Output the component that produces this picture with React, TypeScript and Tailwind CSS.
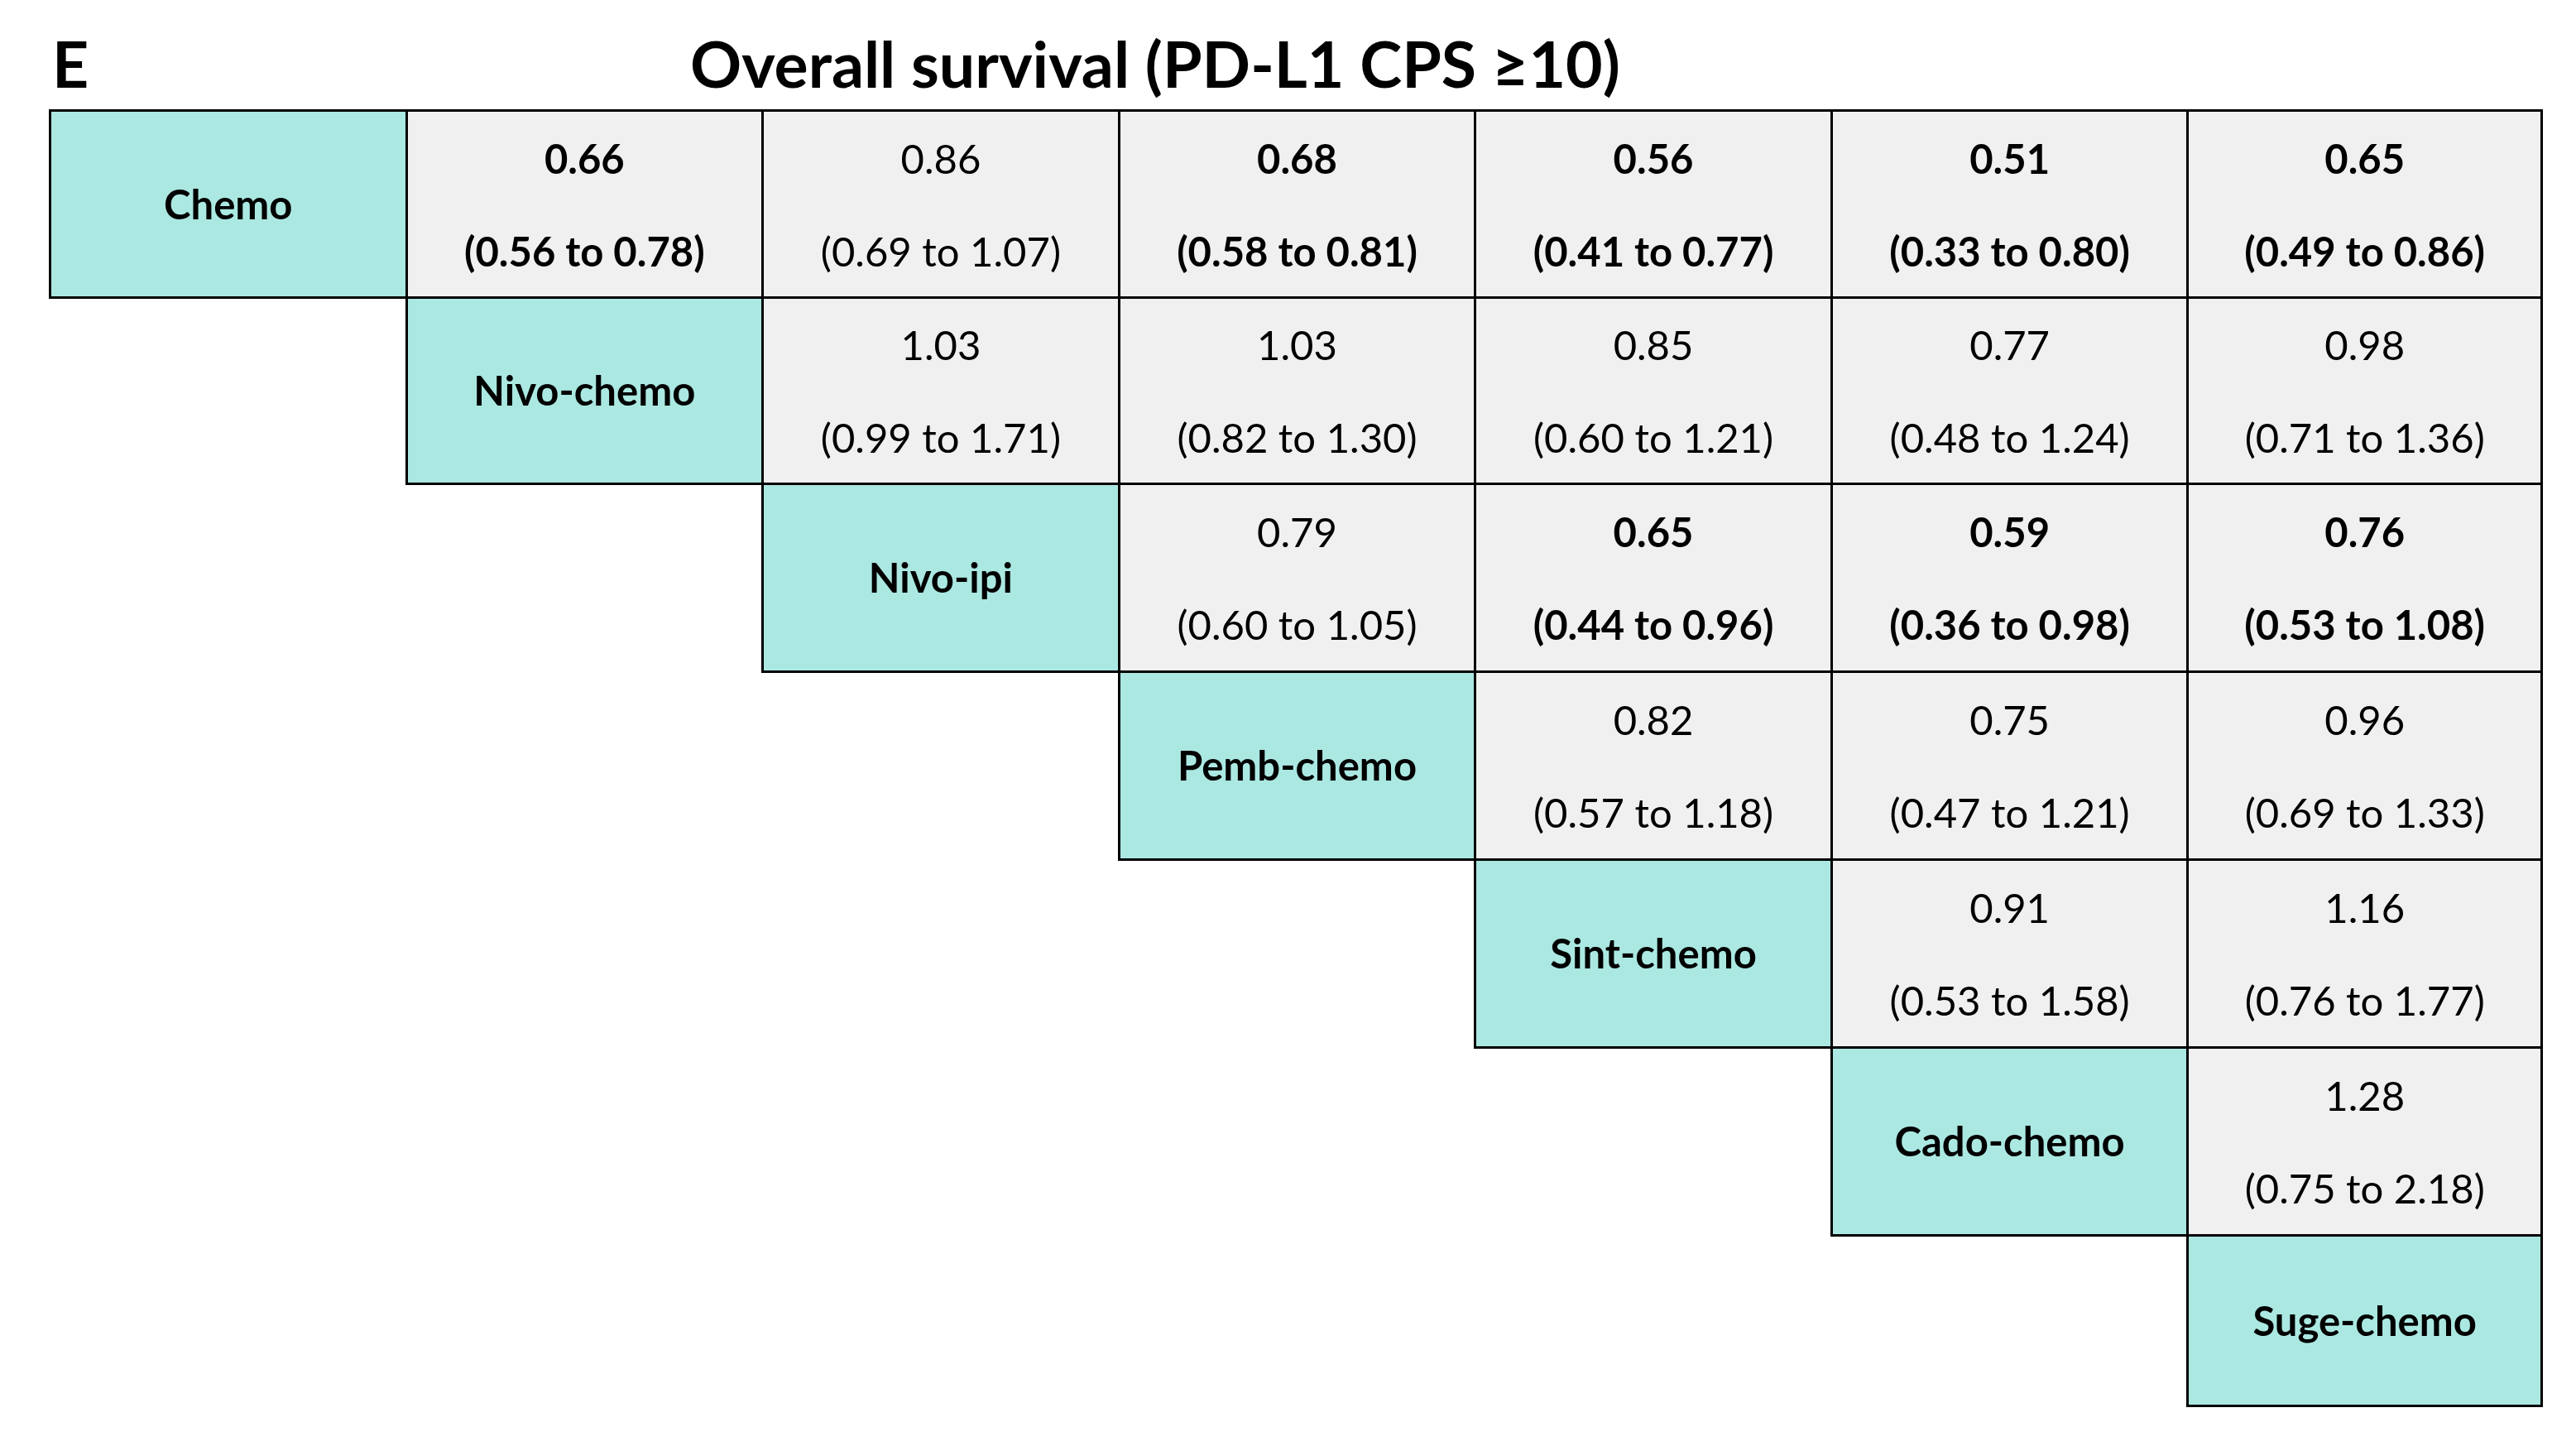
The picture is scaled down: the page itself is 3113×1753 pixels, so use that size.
import React from "react";

type Cell = { v: string; ci: string; b?: boolean };
type Row = { label: string; cells: Cell[] };

const rows: Row[] = [
  {
    label: "Chemo",
    cells: [
      { v: "0.66", ci: "(0.56 to 0.78)", b: true },
      { v: "0.86", ci: "(0.69 to 1.07)" },
      { v: "0.68", ci: "(0.58 to 0.81)", b: true },
      { v: "0.56", ci: "(0.41 to 0.77)", b: true },
      { v: "0.51", ci: "(0.33 to 0.80)", b: true },
      { v: "0.65", ci: "(0.49 to 0.86)", b: true },
    ],
  },
  {
    label: "Nivo-chemo",
    cells: [
      { v: "1.03", ci: "(0.99 to 1.71)" },
      { v: "1.03", ci: "(0.82 to 1.30)" },
      { v: "0.85", ci: "(0.60 to 1.21)" },
      { v: "0.77", ci: "(0.48 to 1.24)" },
      { v: "0.98", ci: "(0.71 to 1.36)" },
    ],
  },
  {
    label: "Nivo-ipi",
    cells: [
      { v: "0.79", ci: "(0.60 to 1.05)" },
      { v: "0.65", ci: "(0.44 to 0.96)", b: true },
      { v: "0.59", ci: "(0.36 to 0.98)", b: true },
      { v: "0.76", ci: "(0.53 to 1.08)", b: true },
    ],
  },
  {
    label: "Pemb-chemo",
    cells: [
      { v: "0.82", ci: "(0.57 to 1.18)" },
      { v: "0.75", ci: "(0.47 to 1.21)" },
      { v: "0.96", ci: "(0.69 to 1.33)" },
    ],
  },
  {
    label: "Sint-chemo",
    cells: [
      { v: "0.91", ci: "(0.53 to 1.58)" },
      { v: "1.16", ci: "(0.76 to 1.77)" },
    ],
  },
  {
    label: "Cado-chemo",
    cells: [{ v: "1.28", ci: "(0.75 to 2.18)" }],
  },
  { label: "Suge-chemo", cells: [] },
];

export default function App() {
  const items: React.ReactNode[] = [];
  rows.forEach((row, r) => {
    for (let c = 0; c < 7; c++) {
      const key = `${r}-${c}`;
      if (c < r) {
        items.push(<div key={key} />);
        continue;
      }
      const edge = [
        "border-l-[3px] border-b-[3px] border-black",
        r === 0 ? "border-t-[3px]" : "",
        c === 6 ? "border-r-[3px]" : "",
      ].join(" ");
      if (c === r) {
        items.push(
          <div
            key={key}
            className={`${edge} bg-[#abe8e2] flex items-center justify-center font-bold`}
          >
            {row.label}
          </div>
        );
      } else {
        const cell = row.cells[c - r - 1];
        items.push(
          <div
            key={key}
            className={`${edge} bg-[#f0f0f0] flex flex-col items-center justify-center ${
              cell.b ? "font-bold" : "font-normal"
            }`}
          >
            <div className="leading-[112px]">{cell.v}</div>
            <div className="leading-[112px]">{cell.ci}</div>
          </div>
        );
      }
    }
  });

  return (
    <div className="w-[3113px] h-[1753px] bg-white text-black font-[family-name:Lato,sans-serif]">
      <div className="h-[132px] pt-[39px] flex text-[77px] leading-[74px] font-bold">
        <div className="pl-[63px] w-[834px]">E</div>
        <div>Overall survival (PD-L1 CPS ≥10)</div>
      </div>
      <div className="ml-[59px] w-[3014px] grid grid-cols-7 grid-rows-[229px_225px_227px_227px_227px_227px_206px] text-[49px]">
        {items}
      </div>
    </div>
  );
}
